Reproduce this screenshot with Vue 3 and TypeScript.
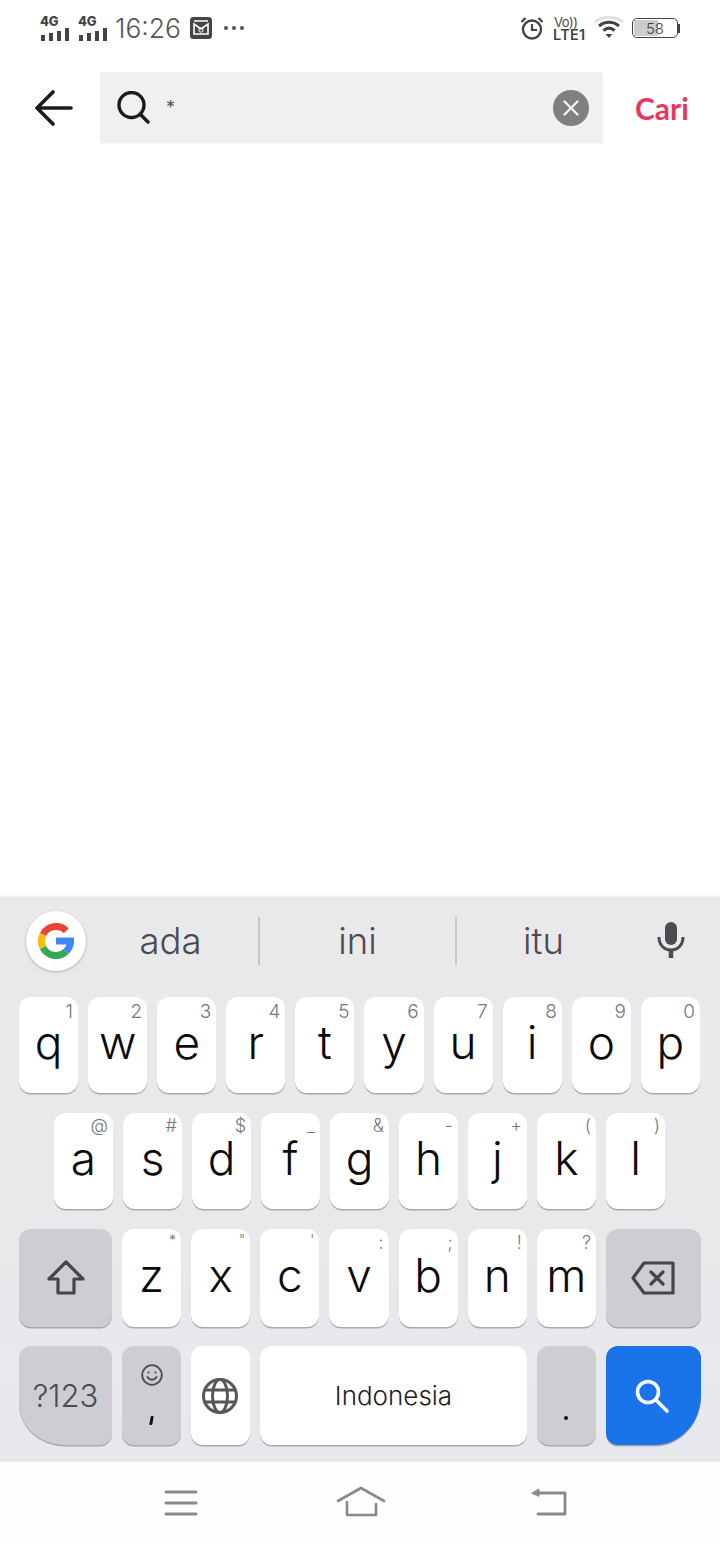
<template>
  <div class="phone">
    <!-- Status bar -->
    <div class="status-bar">
      <div class="status-left">
        <div v-for="n in 2" :key="n" class="signal">
          <span class="signal-label">4G</span>
          <div class="signal-bars">
            <i v-for="h in [6, 8, 10, 13]" :key="h" :style="{ height: h + 'px' }"></i>
          </div>
        </div>
        <span class="clock">16:26</span>
        <svg class="mail" width="22" height="22" viewBox="0 0 22 22">
          <rect width="22" height="22" rx="3.500" fill="#444" />
          <path d="M4 4h14" stroke="#fff" stroke-width="1.500" />
          <path d="M4 7l7 5 7-5v10H4z" fill="none" stroke="#fff" stroke-width="1.600" />
          <circle cx="11" cy="13" r="2.200" fill="none" stroke="#fff" stroke-width="1" />
        </svg>
        <svg width="22" height="6" viewBox="0 0 22 6" fill="#555">
          <circle cx="3" cy="3" r="2" /><circle cx="11" cy="3" r="2" /><circle cx="19" cy="3" r="2" />
        </svg>
      </div>
      <div class="status-right">
        <svg class="alarm" width="24" height="24" viewBox="0 0 24 24" fill="none" stroke="#444">
          <circle cx="12" cy="13.500" r="9" stroke-width="2.400" />
          <path d="M12 8v6h5" stroke-width="2.200" />
          <path d="M1.500 6l4-4M22.500 6l-4-4" stroke-width="2.400" />
        </svg>
        <div class="volte">
          <span class="vo">Vo))</span>
          <span class="lte">LTE1</span>
        </div>
        <svg class="wifi" width="30" height="24" viewBox="0 0 30 24" fill="none" stroke-width="3">
          <path d="M1 6c8-6.500 20-6.500 28 0" stroke="#e2e2e2" />
          <path d="M5 10c6-5 14-5 20 0" stroke="#444" />
          <path d="M9.500 14.500c3.500-3 7.500-3 11 0" stroke="#444" />
          <path d="M11.500 18h7L15 22z" fill="#444" stroke="none" />
        </svg>
        <div class="battery">
          <div class="battery-body">
            <div class="battery-fill"></div>
            <span>58</span>
          </div>
          <div class="battery-tip"></div>
        </div>
      </div>
    </div>

    <!-- Search header -->
    <div class="search-header">
      <svg class="back" width="38" height="36" viewBox="0 0 38 36" fill="none" stroke="#1b1b1f" stroke-width="3.600" stroke-linecap="round">
        <path d="M2 18h34M18 2L2 18l16 16" />
      </svg>
      <div class="search-box">
        <svg width="33" height="33" viewBox="0 0 33 33" fill="none" stroke="#1b1b1f" stroke-width="3.400" stroke-linecap="round">
          <circle cx="14.500" cy="14" r="12.500" />
          <path d="M24 24l7 7" />
        </svg>
        <span class="query">*</span>
        <div class="clear">
          <svg width="18" height="18" viewBox="0 0 18 18" stroke="#f4f4f4" stroke-width="2.400" stroke-linecap="round">
            <path d="M2.500 2.500l13 13M15.500 2.500l-13 13" />
          </svg>
        </div>
      </div>
      <span class="cari">Cari</span>
    </div>

    <div class="blank"></div>

    <!-- Keyboard -->
    <div class="keyboard">
      <div class="suggestions">
        <div class="g-button">
          <svg width="36" height="36" viewBox="0 0 36 36" fill="none" stroke-width="7">
            <path d="M28.300 7.800A14.500 14.500 0 0 0 5 11.500" stroke="#ea4335" />
            <path d="M5 11.500a14.500 14.500 0 0 0 0 13" stroke="#fbbc05" />
            <path d="M5 24.500A14.500 14.500 0 0 0 28 28.500" stroke="#34a853" />
            <path d="M28 28.500A14.500 14.500 0 0 0 32.500 18" stroke="#4285f4" />
            <rect x="18" y="14.500" width="18" height="7" fill="#4285f4" stroke="none" />
          </svg>
        </div>
        <div v-for="(word, i) in suggestions" :key="word" class="word" :class="'word-' + i">{{ word }}</div>
        <svg class="mic" width="28" height="36" viewBox="0 0 28 36" fill="none">
          <rect x="8" y="0" width="12" height="23" rx="6" fill="#4c4c50" />
          <path d="M2 15c0 8 5 13 12 13s12-5 12-13" stroke="#4c4c50" stroke-width="3" />
          <path d="M14 27v9" stroke="#4c4c50" stroke-width="4.500" />
        </svg>
      </div>

      <div class="row row-1">
        <div v-for="k in rowOne" :key="k.label" class="key">
          <span class="hint">{{ k.hint }}</span>
          <span class="letter">{{ k.label }}</span>
        </div>
      </div>

      <div class="row row-2">
        <div v-for="k in rowTwo" :key="k.label" class="key">
          <span class="hint sym">{{ k.hint }}</span>
          <span class="letter">{{ k.label }}</span>
        </div>
      </div>

      <div class="row row-3">
        <div class="key dark side-left">
          <svg width="38" height="36" viewBox="0 0 38 36" fill="none" stroke="#45454d" stroke-width="3.200" stroke-linejoin="round">
            <path d="M19 2L2 19h9v14h16V19h9z" />
          </svg>
        </div>
        <div v-for="(k, i) in rowThree" :key="k.label" class="key">
          <span class="hint" :class="i < 3 ? 'small' : 'mid'">{{ k.hint }}</span>
          <span class="letter">{{ k.label }}</span>
        </div>
        <div class="key dark side-right">
          <svg width="44" height="34" viewBox="0 0 44 34" fill="none" stroke="#45454d" stroke-width="3.200" stroke-linejoin="round">
            <path d="M13 2h29v30H13L2 17z" />
            <path d="M20 11l12 12M32 11L20 23" stroke-linecap="round" />
          </svg>
        </div>
      </div>

      <div class="row row-4">
        <div class="key dark side-left curve-left"><span class="num">?123</span></div>
        <div class="key dark emoji-key">
          <svg width="22" height="22" viewBox="0 0 22 22" fill="none" stroke="#4c4c50" stroke-width="1.800">
            <circle cx="11" cy="11" r="9.800" />
            <path d="M6.500 13c2 3.500 7 3.500 9 0" stroke-linecap="round" />
            <circle cx="7.500" cy="8.500" r="1.100" fill="#4c4c50" stroke="none" />
            <circle cx="14.500" cy="8.500" r="1.100" fill="#4c4c50" stroke="none" />
          </svg>
          <span class="comma"></span>
        </div>
        <div class="key">
          <svg class="globe" width="38" height="38" viewBox="0 0 38 38" fill="none" stroke="#57575b" stroke-width="3">
            <circle cx="19" cy="19" r="16.500" />
            <ellipse cx="19" cy="19" rx="7.500" ry="16.500" />
            <path d="M4 13h30M4 25h30" />
          </svg>
        </div>
        <div class="key space"><span class="lang">Indonesia</span></div>
        <div class="key dark period-key"><span class="dot"></span></div>
        <div class="key side-right go">
          <svg width="36" height="36" viewBox="0 0 36 36" fill="none" stroke="#fff" stroke-width="3.600" stroke-linecap="round">
            <circle cx="14" cy="14" r="10.500" />
            <path d="M22 22l11 11" />
          </svg>
        </div>
      </div>
    </div>

    <!-- Navigation bar -->
    <div class="nav-bar">
      <svg width="34" height="26" viewBox="0 0 34 26" stroke="#88898d" stroke-width="3" stroke-linecap="round">
        <path d="M2 2h30M2 13h30M2 24h30" />
      </svg>
      <svg width="50" height="32" viewBox="0 0 50 32" fill="none" stroke="#88898d" stroke-width="2.600" stroke-linecap="round" stroke-linejoin="round">
        <path d="M2 15L25 2l23 13" />
        <path d="M11 16v13h29V18" />
      </svg>
      <svg width="36" height="30" viewBox="0 0 36 30" fill="none" stroke="#88898d" stroke-width="2.800" stroke-linecap="round" stroke-linejoin="round">
        <path d="M5 6h29v21H7" />
        <path d="M1 6l7-4v7z" fill="#88898d" stroke-width="1" />
      </svg>
    </div>
  </div>
</template>

<script setup lang="ts">
interface KeyDef {
  label: string
  hint: string
}

const toKeys = (labels: string, hints: string): KeyDef[] =>
  labels.split('').map((label, i) => ({ label, hint: hints[i] }))

const suggestions = ['ada', 'ini', 'itu']
const rowOne = toKeys('qwertyuiop', '1234567890')
const rowTwo = toKeys('asdfghjkl', '@#$_&-+()')
const rowThree = toKeys('zxcvbnm', '*"\':;!?')
</script>

<style>
html,
body {
  margin: 0;
  background: #fff;
}
</style>

<style scoped>
.phone {
  width: 720px;
  height: 1544px;
  display: flex;
  flex-direction: column;
  background: #fff;
  font-family: Inter, "Liberation Sans", sans-serif;
  overflow: hidden;
}

/* Status bar */
.status-bar {
  height: 56px;
  display: flex;
  justify-content: space-between;
  align-items: center;
  padding: 0 40px;
  color: #555;
}

.status-left,
.status-right {
  display: flex;
  align-items: center;
}

.signal {
  width: 31px;
  margin-right: 7px;
  display: flex;
  flex-direction: column;
  height: 26px;
  position: relative;
}

.signal-label {
  font-size: 13px;
  font-weight: 800;
  line-height: 13px;
  letter-spacing: -0.3px;
  color: #444;
}

.signal-bars {
  position: absolute;
  left: 1px;
  bottom: 0;
  display: flex;
  align-items: flex-end;
  gap: 4px;
}

.signal-bars i {
  display: block;
  width: 4px;
  background: #444;
}

.clock {
  font-size: 26.500px;
  font-weight: 300;
  color: #555;
  margin: 0 9px 0 -1px;
}

.mail {
  margin-right: 11px;
}

.alarm {
  margin-right: 9px;
}

.wifi {
  margin-right: 9px;
}

.volte {
  display: flex;
  flex-direction: column;
  margin-right: 7px;
  width: 34px;
  color: #444;
}

.vo {
  font-size: 13px;
  line-height: 13px;
  letter-spacing: -0.5px;
  padding-left: 1px;
}

.lte {
  font-size: 14.500px;
  line-height: 12px;
  font-weight: 600;
  letter-spacing: 0.3px;
}

.battery {
  display: flex;
  align-items: center;
  margin-left: -1px;
}

.battery-body {
  width: 44px;
  height: 18px;
  border: 1.500px solid #444;
  border-radius: 5px;
  position: relative;
  overflow: hidden;
  display: flex;
  align-items: center;
  justify-content: center;
}

.battery-fill {
  position: absolute;
  left: 1px;
  top: 1px;
  bottom: 1px;
  width: 24px;
  background: #ccc;
}

.battery-body span {
  position: relative;
  font-size: 15px;
  font-weight: 300;
  color: #444;
}

.battery-tip {
  width: 2px;
  height: 9px;
  background: #444;
}

/* Header */
.search-header {
  height: 71px;
  margin-top: 16px;
  display: flex;
  align-items: center;
}

.back {
  margin: 0 27px 0 35px;
}

.search-box {
  width: 503px;
  height: 71px;
  box-sizing: border-box;
  background: #f0f0f2;
  border-radius: 3px;
  box-shadow: 0 1px 2px rgba(0, 0, 0, 0.04);
  display: flex;
  align-items: center;
  padding: 0 14px 0 17px;
}

.query {
  font-size: 18px;
  font-weight: 400;
  color: #555;
  margin: 0 0 0 16px;
  flex: 1;
}

.clear {
  width: 36px;
  height: 36px;
  border-radius: 50%;
  background: #808083;
  display: flex;
  align-items: center;
  justify-content: center;
}

.cari {
  margin-left: 32px;
  font-family: Lato, sans-serif;
  font-size: 30px;
  font-weight: 700;
  color: #e8375f;
}

.blank {
  flex: 1;
}

/* Keyboard */
.keyboard {
  height: 566px;
  box-sizing: border-box;
  background: linear-gradient(to bottom, #e9e9eb 0%, #e9e9eb 55%, #e7e7ee 100%);
  border-top: 1px solid #f2f2f3;
  box-shadow: 0 -3px 4px rgba(0, 0, 0, 0.015);
  padding: 0 19px;
}

.suggestions {
  height: 100px;
  display: flex;
  align-items: center;
  position: relative;
  margin: 0 -19px;
  padding: 0 0 12px 26px;
  box-sizing: border-box;
}

.g-button {
  width: 60px;
  height: 60px;
  flex: none;
  border-radius: 50%;
  background: #fff;
  box-shadow: 0 1px 3px rgba(0, 0, 0, 0.25);
  display: flex;
  align-items: center;
  justify-content: center;
  margin-right: -23px;
  position: relative;
}

.word {
  width: 197px;
  height: 48px;
  box-sizing: border-box;
  display: flex;
  align-items: center;
  justify-content: center;
  font-size: 36.500px;
  font-weight: 300;
  color: #4a4b50;
}

.word-0 {
  padding-left: 20px;
  border-right: 2px solid #c6c6c9;
}

.word-1 {
  border-right: 2px solid #c6c6c9;
}

.word-2 {
  padding-right: 24px;
}

.mic {
  position: absolute;
  left: 657px;
  top: 25px;
}

.row {
  display: flex;
  gap: 10px;
  margin-bottom: 20px;
}

.row-1,
.row-2 {
  height: 96px;
}

.row-1 {
  margin-right: 1px;
}

.row-2 {
  padding: 0 36px 0 35px;
}

.row-3 {
  height: 98px;
  margin-bottom: 19px;
}

.row-4 {
  height: 99px;
  margin-bottom: 0;
}

.key {
  flex: 1 1 0;
  min-width: 0;
  position: relative;
  background: #fff;
  border-radius: 12px;
  box-shadow: 0 1.500px 0 #a9a9ae;
  display: flex;
  align-items: center;
  justify-content: center;
}

.key.dark {
  background: #cdcdd3;
}

.letter {
  font-size: 46px;
  font-weight: 260;
  line-height: 36px;
  color: #0a0a0a;
  position: relative;
  top: -3px;
}

.hint {
  position: absolute;
  top: 6px;
  right: 5px;
  font-size: 19px;
  font-weight: 300;
  line-height: 18px;
  color: #77777b;
}

.hint.sym {
  font-size: 18px;
  top: 4px;
}

.hint.small {
  font-size: 15px;
  top: 2px;
}

.hint.mid {
  font-size: 18px;
  top: 5px;
}

.side-left {
  flex: 0 0 93px;
}

.side-right {
  flex: 0 0 95px;
}

.curve-left {
  border-bottom-left-radius: 46px 42px;
}

.num {
  font-size: 31px;
  font-weight: 300;
  color: #4c4c50;
}

.emoji-key {
  flex-direction: column;
  justify-content: flex-start;
  padding-top: 18px;
}

.comma {
  position: absolute;
  left: 28px;
  top: 70px;
  width: 3px;
  height: 9px;
  background: #111;
  border-radius: 1px;
  transform: skewX(-10deg);
}

.globe {
  margin-right: 2px;
}

.space {
  flex: 0 0 267px;
}

.lang {
  font-size: 26px;
  font-weight: 300;
  color: #1d1d20;
}

.period-key {
  flex: 1 1 0;
}

.dot {
  position: absolute;
  left: 27px;
  top: 70px;
  width: 4px;
  height: 4px;
  border-radius: 50%;
  background: #111;
}

.key.go {
  background: #1a73e8;
  border-bottom-right-radius: 46px 50px;
}

.go svg {
  margin-right: 3px;
}

/* Nav bar */
.nav-bar {
  height: 82px;
  flex: none;
  background: #fefefe;
  position: relative;
}

.nav-bar svg {
  position: absolute;
}

.nav-bar svg:nth-child(1) {
  left: 164px;
  top: 28px;
}

.nav-bar svg:nth-child(2) {
  left: 336px;
  top: 24px;
}

.nav-bar svg:nth-child(3) {
  left: 531px;
  top: 25px;
}
</style>
